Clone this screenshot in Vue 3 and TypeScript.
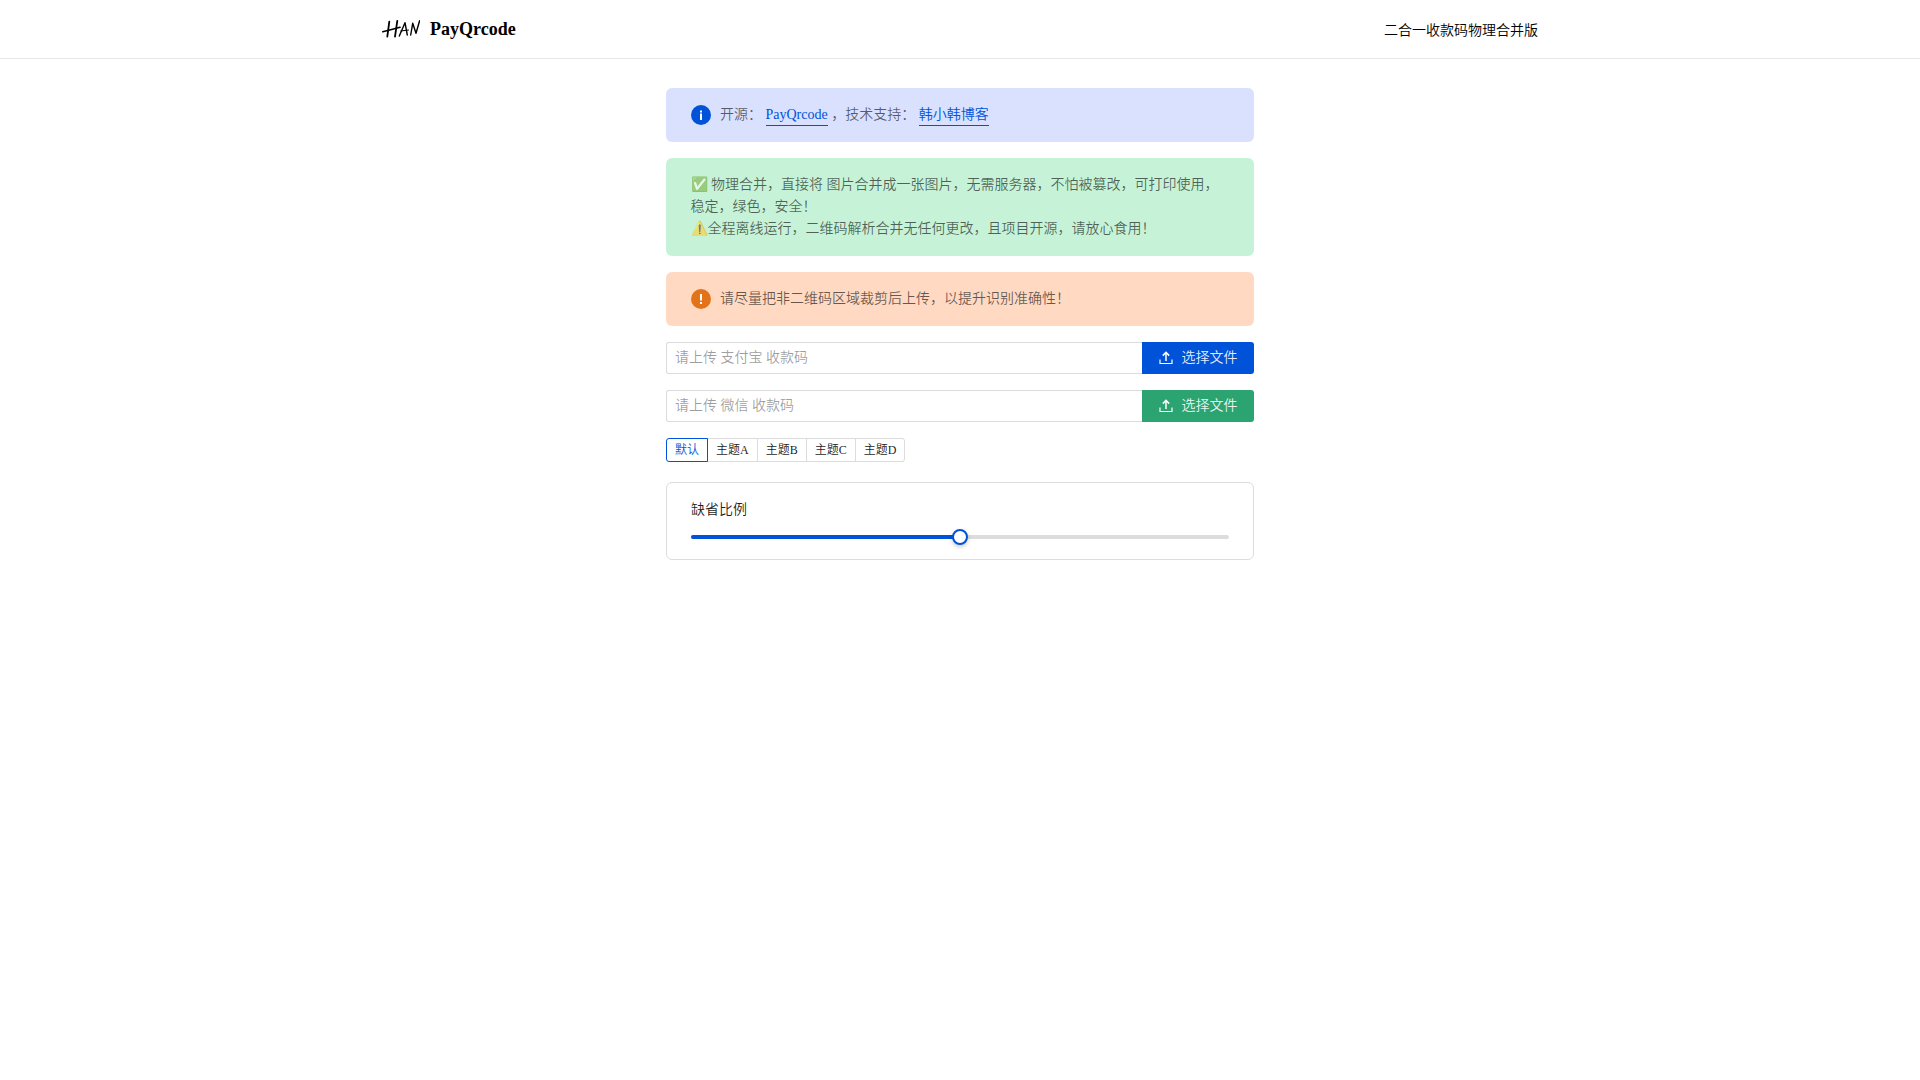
<script setup lang="ts">
const themes: string[] = ['默认', '主题A', '主题B', '主题C', '主题D']
</script>

<template>
  <div class="page" lang="zh-CN">
    <header class="header">
      <div class="header-inner">
        <div class="brand">
          <svg class="logo" width="38" height="18" viewBox="0 0 38 18" fill="none" stroke="#000" stroke-linecap="round" stroke-linejoin="round">
            <path d="M7.3 1.7 L5.3 16.7" stroke-width="1.8" />
            <path d="M15.3 0.9 L13 16.7" stroke-width="1.8" />
            <path d="M0.8 11.7 C6 10.5 12 9 18 7.3" stroke-width="1.6" />
            <path d="M17.3 16 L23 2.7 L25.3 15" stroke-width="1.4" />
            <path d="M18.8 11 L26.5 10" stroke-width="1.1" />
            <path d="M28.7 15 L30.7 3.3 L34 13.3 L37.6 0.8" stroke-width="1.4" />
          </svg>
          <span class="brand-name">PayQrcode</span>
        </div>
        <div class="subtitle">二合一收款码物理合并版</div>
      </div>
    </header>

    <main class="main">
      <div class="alert alert-info">
        <svg class="alert-icon" width="20" height="20" viewBox="0 0 20 20">
          <circle cx="10" cy="10" r="10" fill="#0052d9" />
          <rect x="9" y="8.5" width="2" height="6.5" fill="#fff" />
          <rect x="9" y="5.5" width="2" height="2" fill="#fff" />
        </svg>
        <div>开源： <a class="link">PayQrcode</a> ，技术支持： <a class="link">韩小韩博客</a></div>
      </div>

      <div class="alert alert-success">
        <div>✅ 物理合并，直接将 图片合并成一张图片，无需服务器，不怕被篡改，可打印使用，稳定，绿色，安全！<br />⚠️全程离线运行，二维码解析合并无任何更改，且项目开源，请放心食用！</div>
      </div>

      <div class="alert alert-warning">
        <svg class="alert-icon" width="20" height="20" viewBox="0 0 20 20">
          <circle cx="10" cy="10" r="10" fill="#e37318" />
          <rect x="9" y="5" width="2" height="6.5" fill="#fff" />
          <rect x="9" y="13" width="2" height="2" fill="#fff" />
        </svg>
        <div>请尽量把非二维码区域裁剪后上传，以提升识别准确性！</div>
      </div>

      <div class="upload">
        <div class="fake-input">请上传 支付宝 收款码</div>
        <button class="btn btn-blue">
          <svg width="14" height="14" viewBox="0 0 14 14" fill="none" stroke="#fff" stroke-width="1.2">
            <path d="M1 8.5 V12.5 H13 V8.5" />
            <path d="M7 10 V1.8" stroke-width="1.5" />
            <path d="M3.8 4.6 L7 1.4 L10.2 4.6" stroke-width="1.5" />
          </svg>
          <span class="btn-text">选择文件</span>
        </button>
      </div>

      <div class="upload">
        <div class="fake-input">请上传 微信 收款码</div>
        <button class="btn btn-green">
          <svg width="14" height="14" viewBox="0 0 14 14" fill="none" stroke="#fff" stroke-width="1.2">
            <path d="M1 8.5 V12.5 H13 V8.5" />
            <path d="M7 10 V1.8" stroke-width="1.5" />
            <path d="M3.8 4.6 L7 1.4 L10.2 4.6" stroke-width="1.5" />
          </svg>
          <span class="btn-text">选择文件</span>
        </button>
      </div>

      <div class="themes">
        <div v-for="(t, i) in themes" :key="t" class="theme" :class="{ active: i === 0 }">{{ t }}</div>
      </div>

      <div class="card">
        <div class="card-title">缺省比例</div>
        <div class="slider">
          <div class="track-fill"></div>
          <div class="thumb"></div>
        </div>
      </div>
    </main>
  </div>
</template>

<style>
html, body { margin: 0; background: #fff; }
</style>

<style scoped>
.page {
  font-family: "Liberation Serif", "Noto Sans CJK SC", serif;
  font-weight: 350;
  color: rgba(0, 0, 0, 0.9);
}
.header {
  height: 58px;
  border-bottom: 1px solid #e7e7e7;
}
.header-inner {
  width: 1156px;
  margin: 0 auto;
  height: 100%;
  display: flex;
  align-items: center;
  justify-content: space-between;
}
.brand { display: flex; align-items: center; gap: 10px; }
.logo { display: block; }
.brand-name { font-size: 18px; font-weight: 700; color: #000; }
.subtitle { font-size: 14px; color: #000; }
.main {
  width: 588px;
  margin: 29px auto 0;
  display: flex;
  flex-direction: column;
}
.alert {
  display: flex;
  align-items: flex-start;
  gap: 9px;
  padding: 16px 24px 16px 25px;
  border-radius: 6px;
  font-size: 14px;
  line-height: 22px;
  color: rgba(0, 0, 0, 0.6);
  margin-bottom: 16px;
}
.alert-icon { flex: none; margin-top: 1px; }
.alert-info { background: #d9e1ff; }
.alert-success { background: #c6f3d7; padding-left: 24.5px; }
.alert-warning { background: #ffd9c2; }
.link {
  color: #0052d9;
  border-bottom: 1px solid #0052d9;
  padding-bottom: 3px;
}
.upload { display: flex; height: 32px; margin-bottom: 16px; }
.fake-input {
  flex: 1;
  box-sizing: border-box;
  border: 1px solid #dcdcdc;
  border-right: none;
  border-radius: 3px 0 0 3px;
  padding: 0 8px;
  font-size: 14px;
  line-height: 30px;
  color: rgba(0, 0, 0, 0.4);
}
.btn {
  width: 112px;
  border: none;
  border-radius: 0 3px 3px 0;
  display: flex;
  align-items: center;
  justify-content: center;
  gap: 9px;
  font: inherit;
  font-size: 14px;
  color: rgba(255, 255, 255, 0.9);
  padding: 0;
}
.btn-text { display: block; line-height: 32px; }
.btn-blue { background: #0052d9; }
.btn-green { background: #2ba471; }
.themes { display: flex; margin-bottom: 20px; align-self: flex-start; }
.theme {
  height: 24px;
  box-sizing: border-box;
  border: 1px solid #dcdcdc;
  margin-left: -1px;
  padding: 0 8px;
  font-size: 12px;
  line-height: 22px;
  color: rgba(0, 0, 0, 0.9);
}
.theme:first-child { margin-left: 0; border-radius: 3px 0 0 3px; }
.theme:last-child { border-radius: 0 3px 3px 0; }
.theme.active {
  border-color: #0052d9;
  color: #0052d9;
  position: relative;
  z-index: 1;
}
.card {
  box-sizing: border-box;
  border: 1px solid #dcdcdc;
  border-radius: 6px;
  padding: 16px 24px;
  height: 78px;
}
.card-title { font-size: 14px; line-height: 22px; margin-bottom: 14px; }
.slider {
  position: relative;
  height: 4px;
  border-radius: 2px;
  background: #dcdcdc;
}
.track-fill {
  width: 50%;
  height: 100%;
  border-radius: 2px;
  background: #0052d9;
}
.thumb {
  position: absolute;
  left: 50%;
  top: 50%;
  box-sizing: border-box;
  width: 16px;
  height: 16px;
  transform: translate(-50%, -50%);
  border: 2px solid #0052d9;
  border-radius: 50%;
  background: #fff;
  box-shadow: 0 2px 4px rgba(0, 0, 0, 0.2);
}
</style>
